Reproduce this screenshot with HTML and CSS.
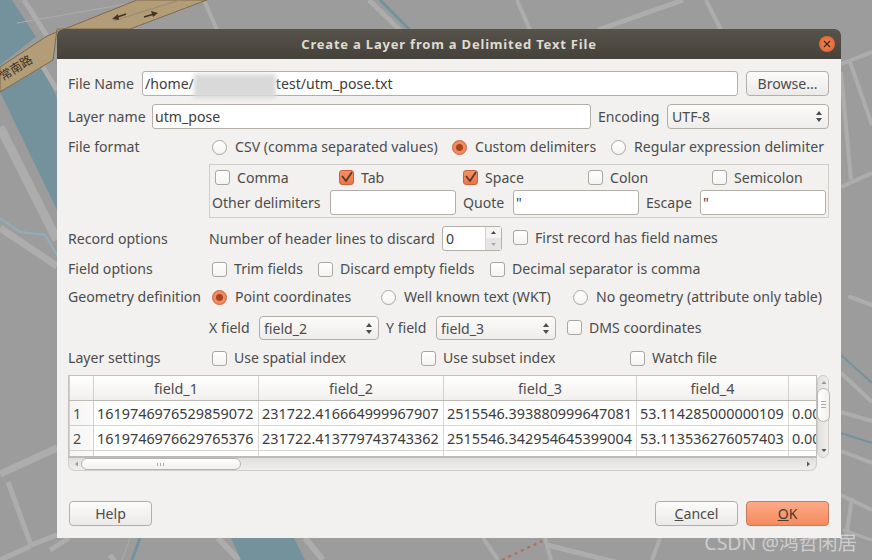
FILE: index.html
```html
<!DOCTYPE html>
<html lang="en">
<head>
    <meta charset="UTF-8">
    <title>Create a Layer from a Delimited Text File</title>
    <link rel="stylesheet" href="styles.css">
</head>
<body>
    <!-- map canvas behind the dialog -->
    <svg class="map" width="872" height="560" viewBox="0 0 872 560">
        <rect width="872" height="560" fill="#9c9c9c"/>
        <polygon points="0,0 12,0 36,37 0,65" fill="#74929c"/>
        <polygon points="0,92 43,67 57,98 57,210" fill="#74929c"/>
        <g fill="none" stroke="#adadad" stroke-width="4">
            <path d="M204 0 L217 30"/>
            <path d="M369 0 L400 30" stroke-width="5"/>
            <path d="M517 0 L530 30"/>
            <path d="M598 30 L683 0" stroke-width="5"/>
            <path d="M706 0 L721 30"/>
            <path d="M841 64 L872 52"/>
            <path d="M850 62 L872 125"/>
            <path d="M841 72 L851 180"/>
            <path d="M841 187 L872 173"/>
            <path d="M850 297 L872 305" stroke-linecap="round"/>
            <path d="M841 373 L872 402"/>
            <path d="M841 412 L872 421"/>
            <path d="M841 451 L872 463"/>
            <path d="M841 495 L872 510"/>
            <path d="M852 498 L846 538"/>
            <path d="M843 530 L872 540" stroke-width="3"/>
            <path d="M24 0 L47 36" stroke-width="5"/>
            <path d="M43 67 L57 90" stroke-width="5"/>
            <path d="M17 23 L150 0" stroke-width="1"/>
            <path d="M0 127 L57 240" stroke-width="9"/>
            <path d="M0 228 L57 266" stroke-width="7"/>
            <path d="M0 474 L57 448" stroke-width="7"/>
            <path d="M8 482 L31 545" stroke-width="5"/>
            <path d="M31 545 L57 535" stroke-width="5"/>
            <path d="M0 560 L31 546" stroke-width="5"/>
            <path d="M50 550 L69 538" stroke-width="5"/>
            <path d="M110 555 L120 568" stroke-width="5"/>
            <path d="M130 538 L122 560" stroke-width="1"/>
            <path d="M218 538 L239 560" stroke-width="6"/>
            <path d="M305 538 L323 560" stroke-width="6"/>
            <path d="M483 538 L498 560"/>
            <path d="M545 538 L551 560"/>
            <path d="M547 545 L647 570" stroke-width="5"/>
            <path d="M660 538 L652 560"/>
        </g>
        <polygon points="231,538 294,538 305,560 241,560" fill="#74929c"/>
        <path d="M140 538 L132 560" stroke="#74929c" stroke-width="3"/>
        <path d="M380 0 L410 30" stroke="#74929c" stroke-width="3"/>
        <path d="M841 355 L872 383" stroke="#74929c" stroke-width="2"/>
        <path d="M841 433 L872 443" stroke="#74929c" stroke-width="2"/>
        <path d="M0 218 L20 232 L45 235 L57 255" fill="none" stroke="#8fb0ba" stroke-width="2"/>
        <path d="M502 560 L542 541" stroke="#b56a5c" stroke-width="2" stroke-dasharray="3 4"/>
        <polygon points="0,67 47,36 137,0 207,0 130,29 57,29 53,60 0,92" fill="#b39c78" stroke="#7f6b4b"/>
        <path d="M113 21 L180 0" stroke="#9b8a70"/>
        <path d="M126 14 L116 17.5" stroke="#3f3522" stroke-width="1.5"/>
        <polygon points="112,19 118,14 119,20" fill="#3f3522"/>
        <path d="M144 17 L154 14" stroke="#3f3522" stroke-width="1.5"/>
        <polygon points="158,13 151,11 153,17" fill="#3f3522"/>
        <text class="road-name" transform="translate(3,81) rotate(-32)">常南路</text>
    </svg>

    <div class="dialog">
        <header class="titlebar">
            <span>Create a Layer from a Delimited Text File</span>
            <span class="close">
                <svg width="8" height="8" viewBox="0 0 8 8"><path d="M1 1 L7 7 M7 1 L1 7" stroke="#4a2412" stroke-width="1.3"/></svg>
            </span>
        </header>

        <div class="content">
            <div class="row tall">
                <label class="name-label">File Name</label>
                <div class="field path">/home/<span class="smudge"></span>test/utm_pose.txt</div>
                <button class="btn browse">Browse...</button>
            </div>

            <div class="row tall">
                <label class="layer-label">Layer name</label>
                <input class="field layer-input" type="text" value="utm_pose">
                <label class="encoding-label">Encoding</label>
                <div class="combo encoding"><span>UTF-8</span><svg class="updown" width="8" height="13" viewBox="0 0 8 13"><path d="M4 1 L7 5 H1 Z M4 12 L7 8 H1 Z" fill="#4c4c4c"/></svg></div>
            </div>

            <div class="row short mt-8">
                <label class="label">File format</label>
                <div class="opt w-240"><span class="radio"></span>CSV (comma separated values)</div>
                <div class="opt w-159"><span class="radio on"></span>Custom delimiters</div>
                <div class="opt"><span class="radio"></span>Regular expression delimiter</div>
            </div>

            <fieldset class="delims">
                <div class="delim-checks">
                    <div class="opt"><span class="check"></span>Comma</div>
                    <div class="opt"><span class="check on"><svg width="15" height="15" viewBox="0 0 15 15"><path d="M3 6 L7 11 L13 2" fill="none" stroke="#5a3a2a" stroke-width="1.8"/></svg></span>Tab</div>
                    <div class="opt"><span class="check on"><svg width="15" height="15" viewBox="0 0 15 15"><path d="M3 6 L7 11 L13 2" fill="none" stroke="#5a3a2a" stroke-width="1.8"/></svg></span>Space</div>
                    <div class="opt"><span class="check"></span>Colon</div>
                    <div class="opt"><span class="check"></span>Semicolon</div>
                </div>
                <div class="delim-fields">
                    <label class="w-118">Other delimiters</label>
                    <input class="field small" type="text">
                    <label class="w-50">Quote</label>
                    <input class="field small" type="text" value="&quot;">
                    <label class="w-54">Escape</label>
                    <input class="field small" type="text" value="&quot;">
                </div>
            </fieldset>

            <div class="row tall mt-8">
                <label class="label">Record options</label>
                <label class="w-233">Number of header lines to discard</label>
                <div class="spin">
                    <span class="spin-value">0</span>
                    <span class="spin-arrows">
                        <svg width="15" height="11" viewBox="0 0 15 11"><path d="M7.5 4 L10 7 H5 Z" fill="#444"/></svg>
                        <svg class="spin-down" width="15" height="12" viewBox="0 0 15 12"><path d="M7.5 8 L10 5 H5 Z" fill="#aaa"/></svg>
                    </span>
                </div>
                <div class="opt first-record"><span class="check"></span>First record has field names</div>
            </div>

            <div class="row short mt-8">
                <label class="label">Field options</label>
                <div class="opt w-106"><span class="check"></span>Trim fields</div>
                <div class="opt w-172"><span class="check"></span>Discard empty fields</div>
                <div class="opt"><span class="check"></span>Decimal separator is comma</div>
            </div>

            <div class="row short mt-8">
                <label class="label">Geometry definition</label>
                <div class="opt w-169"><span class="radio on"></span>Point coordinates</div>
                <div class="opt w-192"><span class="radio"></span>Well known text (WKT)</div>
                <div class="opt"><span class="radio"></span>No geometry (attribute only table)</div>
            </div>

            <div class="row xfield">
                <label class="w-50 indent">X field</label>
                <div class="combo field-combo"><span>field_2</span><svg class="updown" width="8" height="13" viewBox="0 0 8 13"><path d="M4 1 L7 5 H1 Z M4 12 L7 8 H1 Z" fill="#4c4c4c"/></svg></div>
                <label class="w-50 y-label">Y field</label>
                <div class="combo field-combo"><span>field_3</span><svg class="updown" width="8" height="13" viewBox="0 0 8 13"><path d="M4 1 L7 5 H1 Z M4 12 L7 8 H1 Z" fill="#4c4c4c"/></svg></div>
                <div class="opt dms"><span class="check"></span>DMS coordinates</div>
            </div>

            <div class="row short mt-8">
                <label class="label">Layer settings</label>
                <div class="opt w-209"><span class="check"></span>Use spatial index</div>
                <div class="opt w-209"><span class="check"></span>Use subset index</div>
                <div class="opt"><span class="check"></span>Watch file</div>
            </div>

            <div class="sample">
                <div class="sample-left">
                    <div class="table-wrap">
                        <table>
                            <colgroup>
                                <col class="c-num"><col class="c-1"><col class="c-2"><col class="c-3"><col class="c-4"><col class="c-5">
                            </colgroup>
                            <thead>
                                <tr><th></th><th>field_1</th><th>field_2</th><th>field_3</th><th>field_4</th><th></th></tr>
                            </thead>
                            <tbody>
                                <tr><th class="num">1</th><td>1619746976529859072</td><td>231722.416664999967907</td><td>2515546.393880999647081</td><td>53.114285000000109</td><td>0.000000</td></tr>
                                <tr><th class="num">2</th><td>1619746976629765376</td><td>231722.413779743743362</td><td>2515546.342954645399004</td><td>53.113536276057403</td><td>0.000000</td></tr>
                                <tr><th class="num"></th><td></td><td></td><td></td><td></td><td></td></tr>
                            </tbody>
                        </table>
                    </div>
                    <div class="hscroll">
                        <svg class="arrow-left" width="5" height="6" viewBox="0 0 5 6"><path d="M1 3 L4 0.5 V5.5 Z" fill="#999"/></svg>
                        <span class="hthumb"><span class="grip-h"></span></span>
                        <svg class="arrow-right" width="5" height="6" viewBox="0 0 5 6"><path d="M4 3 L1 0.5 V5.5 Z" fill="#555"/></svg>
                    </div>
                </div>
                <div class="vscroll">
                    <svg class="arrow-up" width="6" height="5" viewBox="0 0 6 5"><path d="M3 1 L5.5 4 H0.5 Z" fill="#999"/></svg>
                    <span class="vthumb"><span class="grip-v"></span></span>
                    <svg class="arrow-down" width="6" height="5" viewBox="0 0 6 5"><path d="M3 4 L5.5 1 H0.5 Z" fill="#555"/></svg>
                </div>
            </div>

            <div class="actions">
                <button class="btn">Help</button>
                <div class="actions-right">
                    <button class="btn"><u>C</u>ancel</button>
                    <button class="btn primary"><u>O</u>K</button>
                </div>
            </div>
        </div>
    </div>

    <div class="watermark">CSDN @鸿哲闲居</div>
</body>
</html>
```

FILE: styles.css
```css
/* General */
body {
    margin: 0;
    width: 872px;
    height: 560px;
    overflow: hidden;
    position: relative;
    font-family: "Noto Sans", "Open Sans", sans-serif;
    font-size: 14.1px;
    color: #4c4c4c;
}

.map {
    position: absolute;
    left: 0;
    top: 0;
}

.road-name {
    font-family: "Noto Sans CJK SC", sans-serif;
    font-size: 12px;
    fill: #3a3122;
}

/* Dialog */
.dialog {
    position: absolute;
    left: 57px;
    top: 29px;
    width: 784px;
    height: 509px;
    background-color: #f2f1f0;
    border-radius: 6px 6px 0 0;
}

.titlebar {
    height: 30px;
    display: flex;
    align-items: center;
    justify-content: center;
    position: relative;
    border-radius: 6px 6px 0 0;
    background: linear-gradient(#57534b, #45423b);
    color: #dfdbd2;
    font-size: 13px;
    font-weight: bold;
    letter-spacing: 0.8px;
}

.close {
    position: absolute;
    right: 6px;
    top: 7px;
    width: 16px;
    height: 16px;
    border-radius: 50%;
    background: radial-gradient(#f08a5c, #dc5a26);
    display: flex;
    align-items: center;
    justify-content: center;
}

.content {
    padding: 12px 12px 0 11px;
}

/* Form rows */
.row {
    display: flex;
    align-items: center;
    white-space: nowrap;
}

.tall {
    height: 25px;
    margin-bottom: 8px;
}

.short {
    height: 18px;
    padding-bottom: 2px;
}

.short .radio,
.short .check {
    margin-top: 2px;
}

.mt-8 {
    margin-top: 8px;
}

.tall.mt-8 {
    margin-bottom: 0;
}

.label {
    width: 141px;
    flex: none;
}

.name-label {
    width: 74px;
    flex: none;
}

.layer-label {
    width: 84px;
    flex: none;
}

.encoding-label {
    margin: 0 7px;
    width: 62px;
    flex: none;
}

.w-50 { width: 50px; flex: none; }
.w-54 { width: 54px; flex: none; }
.w-106 { width: 106px; flex: none; }
.w-118 { width: 118px; flex: none; }
.w-159 { width: 159px; flex: none; }
.w-169 { width: 169px; flex: none; }
.w-172 { width: 172px; flex: none; }
.w-192 { width: 192px; flex: none; }
.w-209 { width: 209px; flex: none; }
.w-233 { width: 233px; flex: none; }
.w-240 { width: 240px; flex: none; }

.field {
    box-sizing: border-box;
    height: 25px;
    border: 1px solid #b3aea8;
    border-radius: 3px;
    background: white;
    padding: 0 2px;
    font-family: inherit;
    font-size: 14.1px;
    color: #3c3c3c;
    outline: none;
}

.path {
    width: 596px;
    margin-right: 8px;
    flex: none;
    display: flex;
    align-items: center;
}

.smudge {
    width: 82px;
    height: 24px;
    margin-top: 5px;
    flex: none;
    background-color: #d9d9d9;
    filter: blur(2px);
}

.layer-input {
    width: 439px;
    flex: none;
}

.small {
    width: 126px;
    flex: none;
}

.btn {
    box-sizing: border-box;
    width: 83px;
    height: 25px;
    border: 1px solid #b3aea8;
    border-radius: 4px;
    background: linear-gradient(#fbfbfa, #eceae8);
    font-family: inherit;
    font-size: 14.1px;
    color: #4c4c4c;
    padding: 0;
}

.primary {
    background: linear-gradient(#fdab88, #f58a5e);
    border-color: #c8795a;
    color: #4a3a32;
}

.combo {
    box-sizing: border-box;
    height: 25px;
    border: 1px solid #b3aea8;
    border-radius: 4px;
    background: linear-gradient(#fbfbfa, #eeedeb);
    display: flex;
    align-items: center;
    justify-content: space-between;
    padding: 0 5px 0 4px;
    flex: none;
}

.encoding {
    width: 162px;
}

.field-combo {
    width: 120px;
    height: 24px;
}

/* Radios and checks */
.opt {
    display: flex;
    align-items: center;
}

.radio {
    box-sizing: border-box;
    width: 15px;
    height: 15px;
    margin: 0 8px 0 3px;
    border: 1px solid #aaa6a0;
    border-radius: 50%;
    background: linear-gradient(#ffffff, #f4f3f2);
    flex: none;
}

.radio.on {
    border-color: #c8623a;
    background: radial-gradient(circle, #a8431c 0 3px, #f08a62 4px);
}

.check {
    box-sizing: border-box;
    width: 15px;
    height: 15px;
    margin: 0 7px 0 3px;
    border: 1px solid #aaa6a0;
    border-radius: 3px;
    background: linear-gradient(#ffffff, #f4f3f2);
    flex: none;
    position: relative;
}

.check.on {
    border-color: #c8623a;
    background: linear-gradient(#f58f66, #ee7647);
}

.check svg {
    position: absolute;
    left: -1px;
    top: -1px;
}

/* Delimiter group */
.delims {
    box-sizing: border-box;
    margin: 7px 0 0 141px;
    padding: 0;
    width: 620px;
    height: 54px;
    border: 1px solid #d0cdca;
}

.delim-checks {
    display: grid;
    grid-template-columns: 124px 124px 125px 124px 1fr;
    height: 25px;
    padding-left: 2px;
    box-sizing: border-box;
}

.delim-fields {
    display: flex;
    align-items: center;
    height: 25px;
    padding-left: 2px;
    white-space: nowrap;
}

.delim-fields .w-50,
.delim-fields .w-54 {
    margin-left: 7px;
}

/* Record options */
.spin {
    box-sizing: border-box;
    width: 60px;
    height: 25px;
    border: 1px solid #b3aea8;
    border-radius: 3px;
    display: flex;
    background: white;
    flex: none;
}

.spin-value {
    flex: 1;
    padding: 2px 0 0 3px;
    color: #3c3c3c;
}

.spin-arrows {
    width: 15px;
    display: flex;
    flex-direction: column;
    border-left: 1px solid #d6d3d0;
    background-color: #f5f4f3;
}

.spin-down {
    background-color: #e6e5e3;
}

.first-record {
    margin-left: 8px;
    margin-bottom: 2px;
}

.xfield {
    height: 24px;
    margin-top: 9px;
}

.xfield label {
    margin-bottom: 2px;
}

.indent {
    margin-left: 141px;
}

.y-label {
    margin-left: 7px;
}

.dms {
    margin-left: 8px;
    margin-bottom: 2px;
}

/* Sample table */
.sample {
    display: flex;
    margin-top: 7px;
    height: 95px;
}

.sample-left {
    width: 749px;
    flex: none;
}

.table-wrap {
    box-sizing: border-box;
    height: 83px;
    overflow: hidden;
    border: 1px solid #c4c1bd;
    border-bottom: 2px solid #bdbab6;
    background-color: white;
}

table {
    table-layout: fixed;
    border-collapse: collapse;
    width: 870px;
    font-size: 14.4px;
}

.c-num { width: 24px; }
.c-1 { width: 165px; }
.c-2 { width: 185px; }
.c-3 { width: 193px; }
.c-4 { width: 152px; }
.c-5 { width: 151px; }

th, td {
    height: 24px;
    padding: 0;
    border: 1px solid #d2cfcc;
    font-weight: normal;
    white-space: nowrap;
    overflow: hidden;
}

td {
    padding-left: 3px;
    color: #3c3c3c;
    border-color: #d8d6d3;
}

thead th {
    background: linear-gradient(#ffffff, #f0efed);
    text-align: center;
    border-top: 0;
    border-bottom-color: #bdbab6;
}

th.num {
    text-align: left;
    padding-left: 3px;
    background: linear-gradient(90deg, #f6f5f4, #fbfafa);
}

.hscroll {
    box-sizing: border-box;
    height: 13px;
    border: 1px solid #cfccc9;
    border-top: 0;
    border-radius: 0 0 7px 7px;
    background: linear-gradient(#e2e0de, #efeeec);
    position: relative;
}

.hthumb {
    position: absolute;
    left: 12px;
    top: 0;
    width: 160px;
    height: 12px;
    box-sizing: border-box;
    border: 1px solid #b8b5b1;
    border-radius: 7px;
    background: linear-gradient(#ffffff, #f1f0ee);
}

.grip-h {
    position: absolute;
    left: 75px;
    top: 4px;
    width: 7px;
    height: 3px;
    background: repeating-linear-gradient(90deg, #aaa 0 1px, transparent 1px 3px);
}

.arrow-left {
    position: absolute;
    left: 5px;
    top: 3px;
}

.arrow-right {
    position: absolute;
    right: 5px;
    top: 3px;
}

.vscroll {
    box-sizing: border-box;
    width: 13px;
    height: 83px;
    border: 1px solid #cfccc9;
    border-radius: 7px;
    background: linear-gradient(90deg, #e2e0de, #efeeec);
    position: relative;
}

.vthumb {
    position: absolute;
    left: -1px;
    top: 12px;
    width: 13px;
    height: 34px;
    box-sizing: border-box;
    border: 1px solid #b8b5b1;
    border-radius: 7px;
    background: linear-gradient(90deg, #ffffff, #f1f0ee);
}

.grip-v {
    position: absolute;
    left: 3px;
    top: 12px;
    width: 5px;
    height: 8px;
    background: repeating-linear-gradient(#aaa 0 1px, transparent 1px 3px);
}

.arrow-up {
    position: absolute;
    left: 3px;
    top: 4px;
}

.arrow-down {
    position: absolute;
    left: 3px;
    bottom: 4px;
}

/* Bottom buttons */
.actions {
    display: flex;
    justify-content: space-between;
    margin-top: 31px;
    padding-left: 1px;
}

.actions-right {
    display: flex;
    gap: 8px;
}

.watermark {
    position: absolute;
    right: 15px;
    top: 527px;
    font-family: "Noto Sans", "Noto Sans CJK SC", sans-serif;
    font-size: 19.5px;
    color: rgba(240, 240, 240, 0.6);
    white-space: nowrap;
}
```
